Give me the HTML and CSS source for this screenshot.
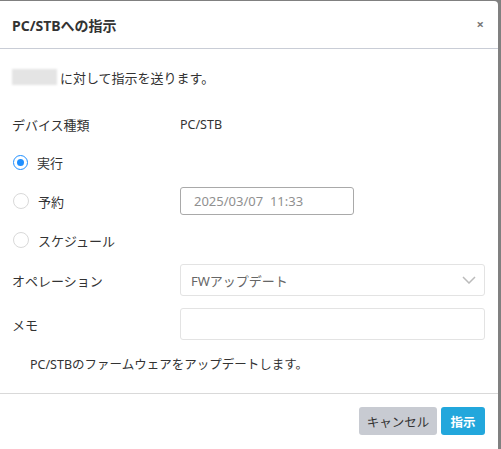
FILE: index.html
```html
<!DOCTYPE html>
<html lang="ja">
<head>
<meta charset="utf-8">
<link rel="stylesheet" href="styles.css">
</head>
<body>
<div class="dialog">
  <div class="header">
    <div class="title">PC/STBへの指示</div>
    <div class="close">×</div>
  </div>
  <div class="content">
    <div class="row intro"><span class="blur"></span>に対して指示を送ります。</div>
    <div class="row device">
      <div class="label">デバイス種類</div>
      <div class="value">PC/STB</div>
    </div>
    <div class="row r1">
      <div class="label radio-label"><span class="radio checked"></span>実行</div>
    </div>
    <div class="row r2">
      <div class="label radio-label"><span class="radio"></span>予約</div>
      <div class="datebox">2025/03/07&nbsp;&nbsp;11:33</div>
    </div>
    <div class="row r3">
      <div class="label radio-label"><span class="radio"></span>スケジュール</div>
    </div>
    <div class="row r4">
      <div class="label">オペレーション</div>
      <div class="select">
        <span>FWアップデート</span>
        <svg class="chev" width="14" height="8" viewBox="0 0 14 8"><polyline points="1,1 7,7 13,1" fill="none" stroke="#bbbbbb" stroke-width="1.5"/></svg>
      </div>
    </div>
    <div class="row r5">
      <div class="label">メモ</div>
      <div class="memo"></div>
    </div>
    <div class="row desc">PC/STBのファームウェアをアップデートします。</div>
  </div>
  <div class="footer">
    <button class="btn cancel">キャンセル</button>
    <button class="btn primary">指示</button>
  </div>
</div>
</body>
</html>
```
FILE: styles.css
```css
html, body {
  margin: 0;
  padding: 0;
}
body {
  background: #808080;
  width: 501px;
  height: 449px;
  overflow: hidden;
  font-family: "Noto Sans", "Noto Sans CJK JP", sans-serif;
  color: #333;
}
.dialog {
  width: 498px;
  margin-top: 1px;
  height: 460px;
  background: #fff;
  border-radius: 0 4px 0 0;
}
.header {
  height: 47px;
  border-bottom: 1px solid #c9cdd6;
  display: flex;
  align-items: center;
  justify-content: space-between;
  padding: 0 14px 0 12px;
}
.title {
  font-size: 14px;
  font-weight: bold;
  color: #333;
}
.close {
  font-size: 13px;
  font-weight: bold;
  color: #777;
  line-height: 1;
}
.content {
  padding: 12px 13px 14px 12px;
  font-size: 13px;
}
.row {
  height: 32px;
  display: flex;
  align-items: center;
}
.device { margin-top: 15px; }
.r1 { margin-top: 6px; }
.r2 { margin-top: 7px; }
.r3 { margin-top: 7px; }
.r4 { margin-top: 8px; }
.r5 { margin-top: 12px; }
.desc { margin-top: 7px; font-size: 12.5px; padding-left: 18px; }
.blur {
  display: inline-block;
  width: 45px;
  height: 16px;
  background: #e4e4e4;
  filter: blur(1px);
  margin-right: 3px;
}
.label {
  width: 168px;
  flex: none;
  display: flex;
  align-items: center;
}
.radio-label { padding-left: 1px; width: 167px; }
.radio {
  width: 14px;
  height: 14px;
  border: 1px solid #d9d9d9;
  border-radius: 50%;
  margin-right: 9px;
  box-sizing: content-box;
  position: relative;
}
.radio.checked {
  border: 1.5px solid #1f8fff;
  width: 13px;
  height: 13px;
}
.radio.checked::after {
  content: "";
  position: absolute;
  left: 3px;
  top: 3px;
  width: 7px;
  height: 7px;
  border-radius: 50%;
  background: #1f8fff;
}
.value { font-size: 12.5px; }
.datebox {
  width: 159px;
  height: 26px;
  border: 1px solid #a9a9a9;
  border-radius: 3px;
  display: flex;
  align-items: center;
  padding-left: 13px;
  color: #909090;
  font-size: 13px;
}
.select {
  flex: 1;
  height: 30px;
  border: 1px solid #e3e3e3;
  border-radius: 3px;
  display: flex;
  align-items: center;
  justify-content: space-between;
  padding: 0 8px 0 10px;
  color: #666;
  font-size: 13px;
}
.memo {
  flex: 1;
  height: 30px;
  border: 1px solid #e3e3e3;
  border-radius: 3px;
}
.footer {
  border-top: 1px solid #d9d9d9;
  display: flex;
  justify-content: flex-end;
  gap: 4px;
  padding: 13px 13px 0 0;
}
.btn {
  height: 28px;
  border: none;
  border-radius: 3px;
  font-family: "Noto Sans", "Noto Sans CJK JP", sans-serif;
  font-size: 12.5px;
  padding: 0;
  white-space: nowrap;
}
.cancel {
  background: #c8cbd2;
  color: #333;
  width: 78px;
}
.primary {
  background: #22a7dc;
  color: #fff;
  font-weight: bold;
  width: 44px;
}
```
